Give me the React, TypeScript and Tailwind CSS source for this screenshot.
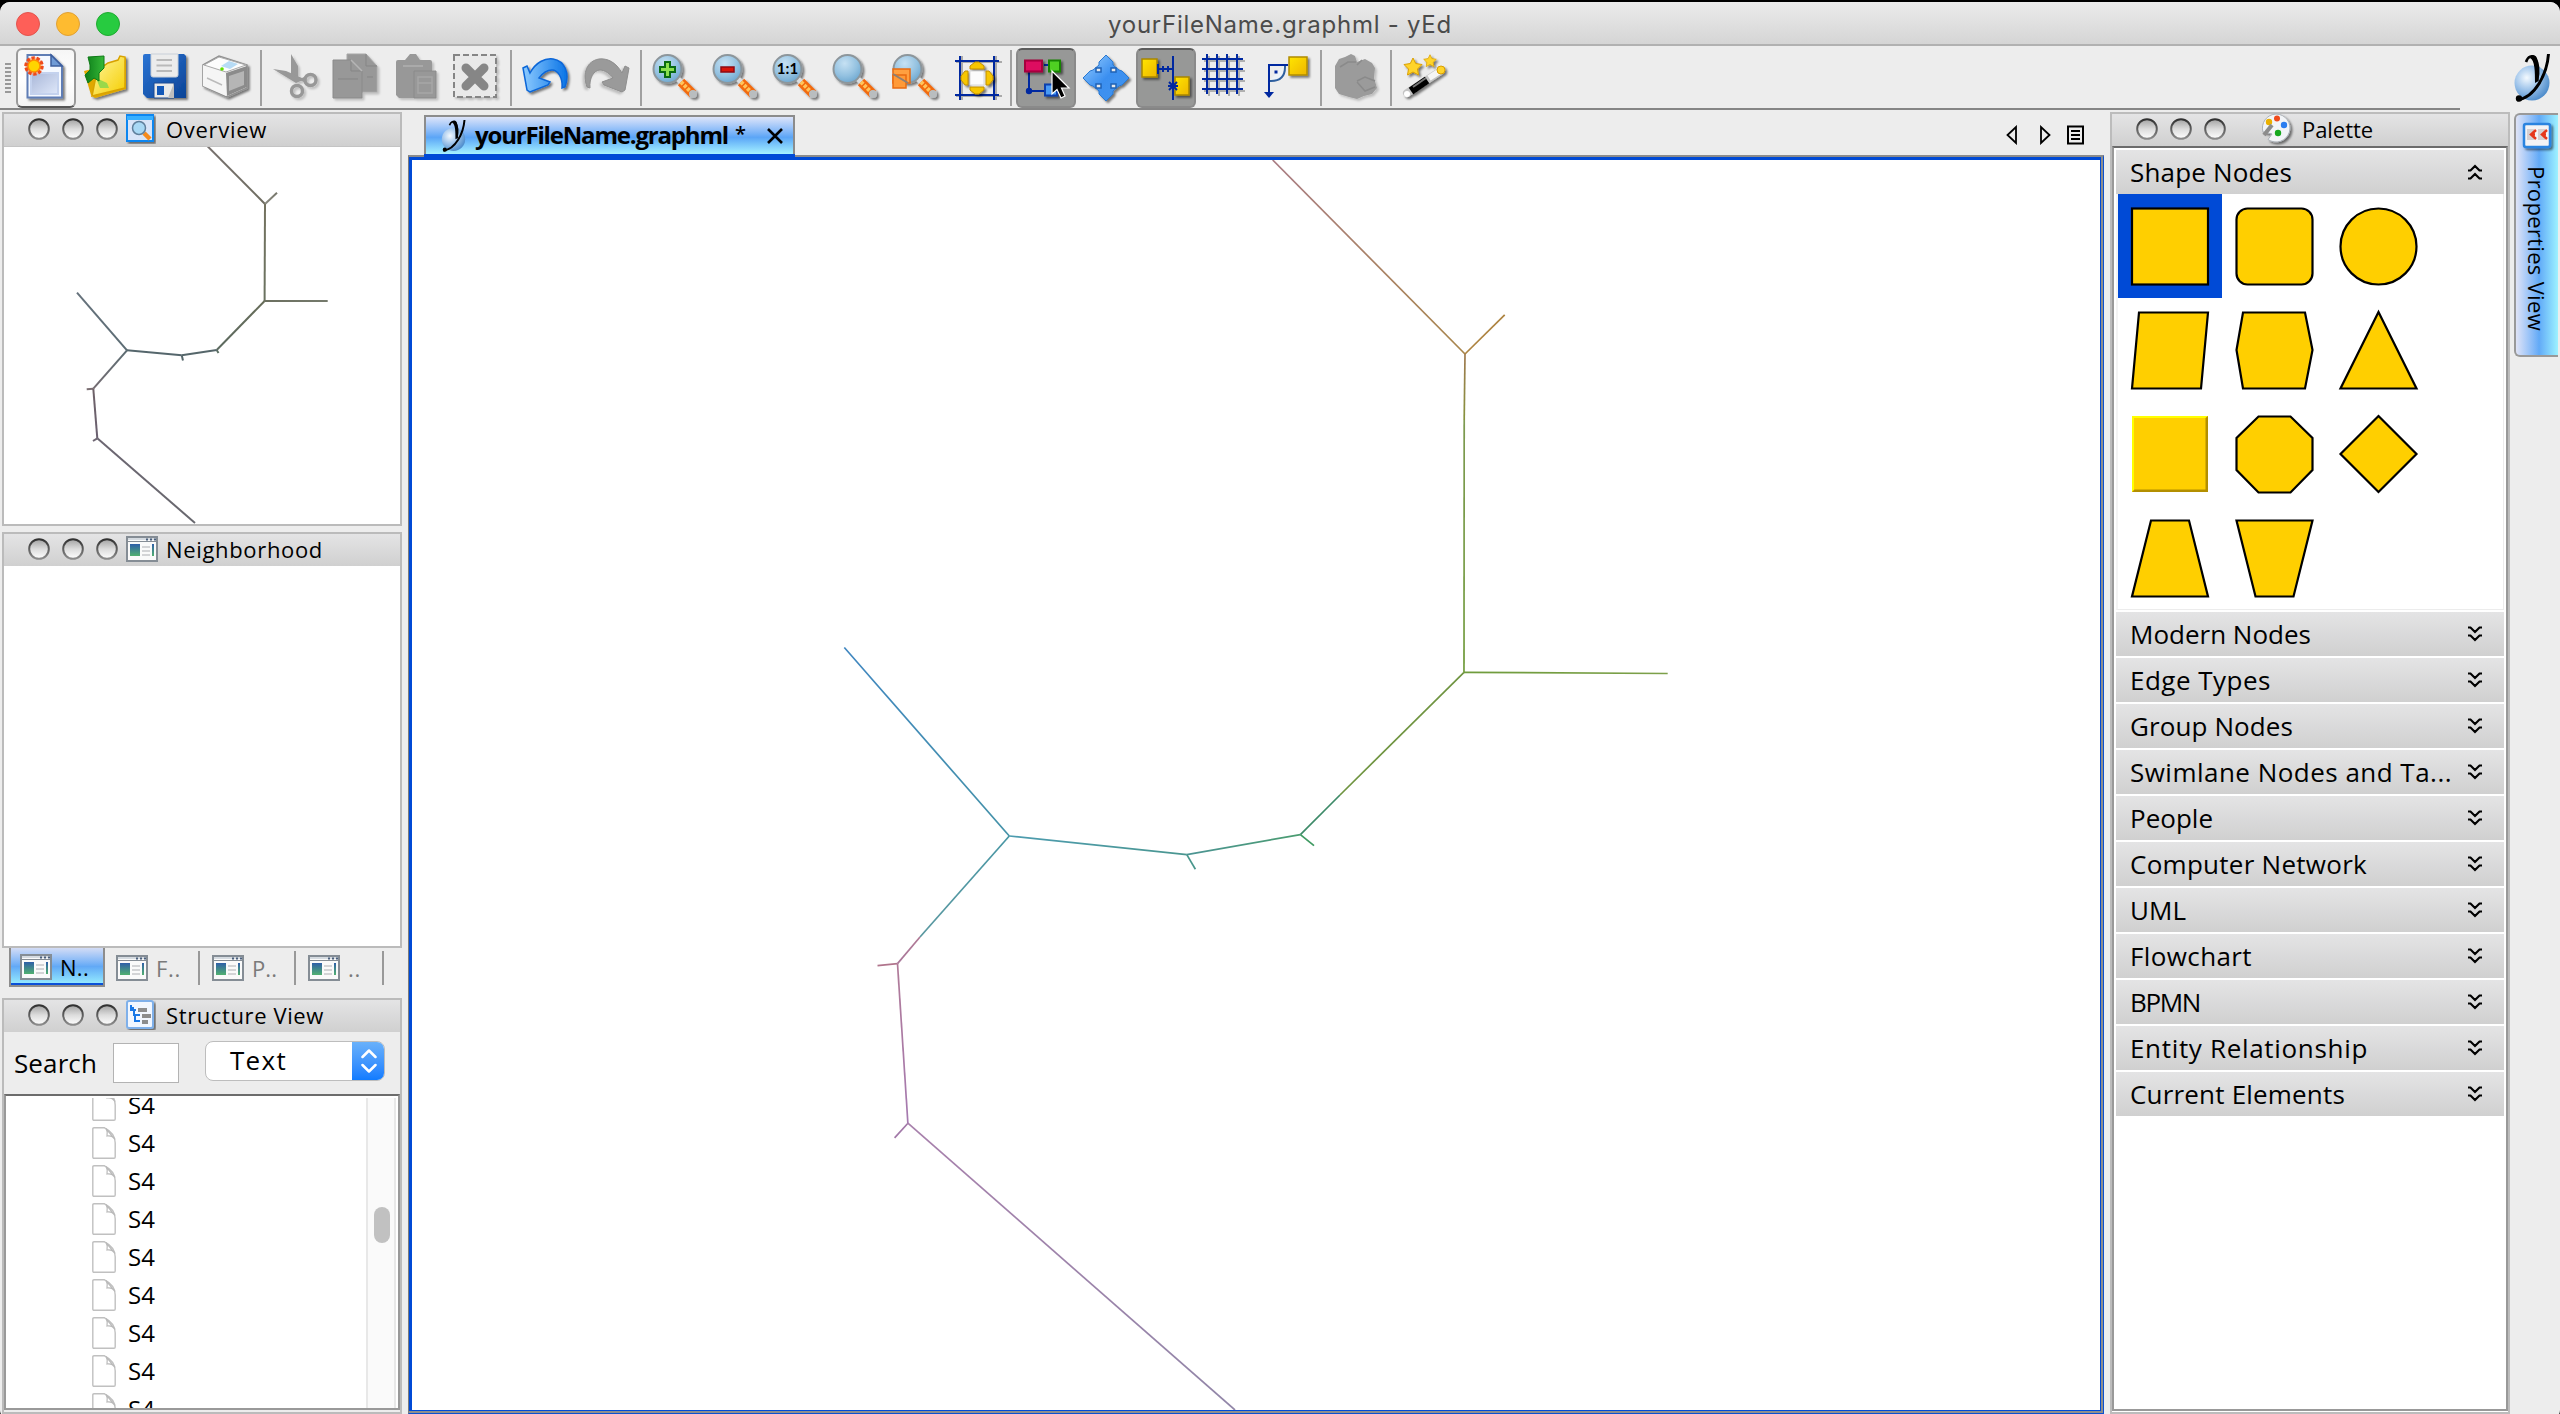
import React, { useLayoutEffect, useRef } from "react";

/* Text tracked so that it fills a given length. */
function T({
  children,
  w,
  vertical = false,
  className = "",
}: {
  children: string;
  w: number;
  vertical?: boolean;
  className?: string;
}) {
  const ref = useRef<HTMLSpanElement>(null);
  useLayoutEffect(() => {
    const el = ref.current;
    if (!el) return;
    el.style.letterSpacing = "0px";
    const box = el.getBoundingClientRect();
    const natural = vertical ? box.height : box.width;
    el.style.letterSpacing = (w - natural) / children.length + "px";
  }, [children, w, vertical]);
  return (
    <span ref={ref} className={"inline-block shrink-0 whitespace-pre " + className}>
      {children}
    </span>
  );
}

function Icon({ children }: { children: React.ReactNode }) {
  return (
    <svg viewBox="0 0 48 48" className="h-12 w-12 overflow-visible">
      {children}
    </svg>
  );
}

function Defs() {
  return (
    <svg className="absolute h-0 w-0">
      <defs>
        <filter id="sh" x="-20%" y="-20%" width="150%" height="150%">
          <feDropShadow dx="2" dy="2" stdDeviation="1" floodColor="#000" floodOpacity="0.5" />
        </filter>
        <filter id="soft" x="-20%" y="-20%" width="150%" height="150%">
          <feDropShadow dx="2" dy="2" stdDeviation="1" floodColor="#000" floodOpacity="0.2" />
        </filter>
        <linearGradient id="page" x1="0" y1="0" x2="1" y2="1">
          <stop offset="0" stopColor="#a9b7d8" />
          <stop offset="1" stopColor="#dfe8fa" />
        </linearGradient>
        <linearGradient id="folder" x1="0" y1="0" x2="1" y2="1">
          <stop offset="0" stopColor="#fff7a0" />
          <stop offset="1" stopColor="#f5cd00" />
        </linearGradient>
        <linearGradient id="green" x1="0" y1="0" x2="1" y2="0">
          <stop offset="0" stopColor="#0d7d1a" />
          <stop offset="1" stopColor="#35b837" />
        </linearGradient>
        <linearGradient id="disk" x1="0" y1="0" x2="1" y2="1">
          <stop offset="0" stopColor="#2b74d4" />
          <stop offset="1" stopColor="#0b4396" />
        </linearGradient>
        <radialGradient id="lens" cx="0.4" cy="0.3" r="0.75">
          <stop offset="0" stopColor="#c6e1f3" />
          <stop offset="0.6" stopColor="#93c1e0" />
          <stop offset="1" stopColor="#6aa5cf" />
        </radialGradient>
        <linearGradient id="undo" x1="0" y1="0" x2="1" y2="0">
          <stop offset="0" stopColor="#8dcbff" />
          <stop offset="1" stopColor="#0a74e6" />
        </linearGradient>
        <linearGradient id="gold" x1="0" y1="0" x2="1" y2="1">
          <stop offset="0" stopColor="#ffe500" />
          <stop offset="1" stopColor="#eeb600" />
        </linearGradient>
        <linearGradient id="move" x1="0" y1="0" x2="1" y2="1">
          <stop offset="0" stopColor="#9bd0ff" />
          <stop offset="0.5" stopColor="#3b8ff0" />
          <stop offset="1" stopColor="#3f93ee" />
        </linearGradient>
        <radialGradient id="ball" cx="0.35" cy="0.35" r="0.7">
          <stop offset="0" stopColor="#f4faff" />
          <stop offset="0.5" stopColor="#9dc3ea" />
          <stop offset="1" stopColor="#4d8ccb" />
        </radialGradient>
        <linearGradient id="knob" x1="0" y1="0" x2="0" y2="1">
          <stop offset="0" stopColor="#a2a2a2" />
          <stop offset="0.5" stopColor="#dcdcdc" />
          <stop offset="1" stopColor="#ffffff" />
        </linearGradient>
        <linearGradient id="knobline" x1="0" y1="0" x2="0" y2="1">
          <stop offset="0" stopColor="#303030" />
          <stop offset="1" stopColor="#8c8c8c" />
        </linearGradient>
        <linearGradient id="win" x1="0" y1="0" x2="0" y2="1">
          <stop offset="0" stopColor="#2f5fa8" />
          <stop offset="1" stopColor="#51b070" />
        </linearGradient>
      </defs>
    </svg>
  );
}

function NewIcon() {
  return (
    <Icon>
      <g filter="url(#sh)">
        <path d="M5.500 1H29L40 12V43.500H5.500Z" fill="#f4f8ff" stroke="#5f7db5" strokeWidth="2" />
      </g>
      <path d="M29 1V12H40Z" fill="#6f9bd6" stroke="#3d5f9e" strokeWidth="1.500" />
      <path d="M9 19H36V40H9Z" fill="url(#page)" stroke="#c4d2ee" strokeWidth="2" />
      <circle cx="12" cy="12" r="9" fill="#ff9e6e" opacity="0.6" />
      <circle cx="12" cy="12" r="8" fill="none" stroke="#ee4a1c" strokeWidth="3.500" strokeDasharray="3.200 1.800" />
      <circle cx="12" cy="12" r="6" fill="#ffd400" stroke="#ff8a00" strokeWidth="1.500" />
    </Icon>
  );
}
function OpenIcon() {
  return (
    <Icon>
      <g filter="url(#sh)">
        <path d="M2 17L9 41L13 44L44 35V4L39 3L36 7L26 9L14 14Z" fill="#e0a800" />
        <path d="M10 42L15 17L26 9L36 6L38 2L43 3V34Z" fill="url(#folder)" stroke="#d8a200" strokeWidth="1.500" />
      </g>
      <path d="M14 24L25 29L27 34L18 34Z" fill="#9ad84a" />
      <path d="M6 3L22 2V14L17 19V27L12 24L6 29L3 21L8 16V11Z" fill="url(#green)" stroke="#0e7a16" strokeWidth="1" />
    </Icon>
  );
}
function SaveIcon() {
  return (
    <Icon>
      <g filter="url(#sh)">
        <path d="M1 2Q1 0 3 0H42L44 2V44H5L1 40Z" fill="url(#disk)" />
      </g>
      <path d="M9 0H36V21Q36 23 34 23H11Q9 23 9 21Z" fill="#ececec" stroke="#c8cfd8" />
      <path d="M14.500 6H30M14.500 11.500H30M14.500 17H30" stroke="#b9b9b9" strokeWidth="1.800" />
      <path d="M12 29H32V44H12Z" fill="#e9e9e9" stroke="#1a4b94" />
      <path d="M15 32H22V41H15Z" fill="#1358b8" />
      <path d="M32 29V44H26Z" fill="#bdbdbd" />
    </Icon>
  );
}
function PrintIcon() {
  return (
    <Icon>
      <g filter="url(#sh)">
        <path d="M1 11L17 2L45 11V34L25 43L1 32Z" fill="#f3f3f3" stroke="#8f8f8f" strokeWidth="1.500" />
      </g>
      <path d="M24 19L45 12V33L25 42Z" fill="#8b8b8b" />
      <path d="M27 22L42 17V31L27 37Z" fill="#b5b5b5" />
      <path d="M1 11L24 19V42L1 32Z" fill="#f5f5f5" />
      <path d="M2 11L17 3L44 11L24 18Z" fill="#fdfdfd" stroke="#a9a9a9" />
      <path d="M19 12L27 7L36 10L28 15Z" fill="#b7dcf6" />
      <circle cx="20" cy="15" r="1.800" fill="#5fe000" />
      <path d="M5 24L20 31" stroke="#bbb" strokeWidth="1.500" />
    </Icon>
  );
}
function CutIcon() {
  return (
    <Icon>
      <g filter="url(#soft)">
        <path d="M19 0L26 12L26 28L19 25Z" fill="#989898" />
        <path d="M1 15L32 28L34 22L30 24L14 17Z" fill="#989898" />
        <path d="M1 15L24 29L31 26Z" fill="#989898" />
        <circle cx="38.500" cy="26" r="5.500" fill="none" stroke="#989898" strokeWidth="3.500" />
        <circle cx="25" cy="37" r="5.500" fill="none" stroke="#989898" strokeWidth="3.500" />
      </g>
    </Icon>
  );
}
function CopyIcon() {
  return (
    <Icon>
      <g filter="url(#soft)" fill="#989898">
        <path d="M15 0H34L45 12V38H15Z" stroke="#a6a6a6" />
        <path d="M1 6H19L30 17V44H1Z" stroke="#8a8a8a" />
      </g>
      <path d="M19 6V17H30M6 25H26M34 0V12H45M35 23H41" stroke="#858585" fill="none" />
      <path d="M19 6L30 17" stroke="#b5b5b5" strokeWidth="1.500" />
    </Icon>
  );
}
function PasteIcon() {
  return (
    <Icon>
      <g filter="url(#soft)" fill="#989898">
        <path d="M4 8Q4 6 6 6H13L18 0H24L28 6H38Q40 6 40 8V44H7L4 41Z" />
        <path d="M22 17H44V44H22Z" stroke="#8a8a8a" />
      </g>
      <path d="M11 12H31" stroke="#aaa" strokeWidth="2" />
      <path d="M26 23H40V39H26ZM26 29H40" stroke="#a6a6a6" fill="none" strokeWidth="1.500" />
    </Icon>
  );
}
function DeleteIcon() {
  return (
    <Icon>
      <g filter="url(#soft)">
        <rect x="2" y="1" width="42" height="42" fill="#e9e9e9" stroke="#858585" strokeWidth="2" strokeDasharray="6 3" />
        <path d="M14 14L32 32M32 14L14 32" stroke="#868686" strokeWidth="9" strokeLinecap="round" />
      </g>
    </Icon>
  );
}
function UndoIcon() {
  return (
    <Icon>
      <g filter="url(#sh)">
        <path
          d="M1 14L5 12L8 19C14 8 23 4 31 5C43 7 48 19 43 33L40 34C41 24 36 16 30 16C25 16 20 20 17 24L28 28L26 31L8 38L5 36Z"
          fill="url(#undo)"
          stroke="#0a66d8"
          strokeWidth="1.500"
        />
      </g>
    </Icon>
  );
}
function RedoIcon() {
  return (
    <Icon>
      <g filter="url(#soft)" transform="translate(48 0) scale(-1 1)">
        <path
          d="M1 14L5 12L8 19C14 8 23 4 31 5C43 7 48 19 43 33L40 34C41 24 36 16 30 16C25 16 20 20 17 24L28 28L26 31L8 38L5 36Z"
          fill="#9a9a9a"
          stroke="#8e8e8e"
          strokeWidth="1"
        />
      </g>
    </Icon>
  );
}
function Lens({ children }: { children?: React.ReactNode }) {
  return (
    <Icon>
      <g filter="url(#sh)">
        <path d="M24 23L30 29" stroke="#d9dde0" strokeWidth="5" />
        <path d="M29 28L41 40" stroke="#f36a10" strokeWidth="9" />
        <path d="M29 28L41 40" stroke="#ffc45a" strokeWidth="4" strokeDasharray="3 1.500" />
        <circle cx="41" cy="40" r="4" fill="#b9bdbf" />
        <circle cx="15.500" cy="15" r="14" fill="url(#lens)" stroke="#8d969b" strokeWidth="2" />
      </g>
      {children}
    </Icon>
  );
}
function FitIcon() {
  return (
    <Icon>
      <path d="M10 2V46M44 2V46M4 8H50M4 42H50" stroke="#aaa" strokeWidth="2" />
      <path d="M8 2V46M42 2V46M3 7H47M3 41H47" stroke="#0028a0" strokeWidth="2" />
      <g fill="#f7c600" stroke="#c08e00" strokeWidth="1" filter="url(#sh)">
        <path d="M18 15V12L23 8H27L32 12V15Z" />
        <path d="M18 33V36L23 40H27L32 36V33Z" />
        <path d="M16 17H13L9 22V26L13 31H16Z" />
        <path d="M34 17H37L41 22V26L37 31H34Z" />
      </g>
      <rect x="18" y="17" width="14" height="14" fill="#fbfbfb" stroke="#d8d8d8" />
    </Icon>
  );
}
function CreateIcon() {
  return (
    <Icon>
      <path d="M22 11H28M7 18V37H22" fill="none" stroke="#0028a0" strokeWidth="2" />
      <circle cx="7" cy="37" r="3.200" fill="#0028a0" />
      <g filter="url(#sh)">
        <rect x="3" y="6.500" width="17" height="11" fill="#dd0d60" stroke="#a5003c" strokeWidth="2" />
        <rect x="27" y="6.500" width="11" height="11" fill="#4fd021" stroke="#178405" strokeWidth="2" />
        <rect x="23" y="30.500" width="12" height="11" fill="#4a9bf5" stroke="#0b3fae" strokeWidth="2" />
      </g>
    </Icon>
  );
}
function MoveIcon() {
  return (
    <Icon>
      <g filter="url(#sh)">
        <path
          d="M24 1L31 8V11L37 16L40 17L47 24L40 31L37 32L31 37V40L24 47L17 40V37L11 32L8 31L1 24L8 17L11 16L17 11V8Z"
          fill="url(#move)"
          stroke="#2a78d0"
          strokeWidth="1"
        />
      </g>
      <g fill="#e6e9ec" stroke="#1f62b5" strokeWidth="1.500">
        <rect x="14" y="14" width="5" height="4" />
        <rect x="29" y="14" width="5" height="4" />
        <rect x="14" y="30" width="5" height="4" />
        <rect x="29" y="30" width="5" height="4" />
      </g>
    </Icon>
  );
}
function SnapIcon() {
  return (
    <Icon>
      <g filter="url(#sh)">
        <rect x="0" y="5" width="15" height="18" fill="url(#gold)" stroke="#a88600" strokeWidth="1.500" />
        <rect x="33" y="23" width="14" height="18" fill="url(#gold)" stroke="#a88600" strokeWidth="1.500" />
      </g>
      <path d="M31 2V46M16 15H30M16 10V20M21 12V18M26 12V18M26 32H36M27 28L35 36M35 28L27 36" stroke="#0028a0" strokeWidth="2" fill="none" />
    </Icon>
  );
}
function GridIcon() {
  return (
    <Icon>
      <g transform="translate(-2 0)">
        <path d="M9 2V42M19 2V42M29 2V42M39 2V42M4 7H45M4 17H45M4 27H45M4 37H45" stroke="#b0b0b0" strokeWidth="2" />
        <path d="M7 0V40M17 0V40M27 0V40M37 0V40M2 5H43M2 15H43M2 25H43M2 35H43" stroke="#0028a0" strokeWidth="2" />
      </g>
    </Icon>
  );
}
function OrthoIcon() {
  return (
    <Icon>
      <path d="M7 27H9C18 27 23 22 23 13V11" fill="#eef3f8" stroke="#2e5f9e" strokeWidth="2" />
      <rect x="12.500" y="16.500" width="3" height="3" fill="#0028a0" />
      <path d="M26 11H7V40" fill="none" stroke="#0028a0" strokeWidth="2" />
      <path d="M2 38H12L7 44Z" fill="#0028a0" />
      <g filter="url(#sh)">
        <rect x="27" y="3" width="18" height="18" fill="url(#gold)" stroke="#b08c00" strokeWidth="1.500" />
      </g>
    </Icon>
  );
}
function BlobIcon() {
  return (
    <Icon>
      <g filter="url(#soft)">
        <path d="M3 12L7 5L13 3L19 0L23 2L25 8L33 5L40 9L43 14L42 24L45 34L40 40L32 42L25 45L17 43L7 40L3 34Z" fill="#9b9b9b" />
      </g>
      <path d="M8 13L16 8L24 8M30 6L25 11M25 27L33 23L43 27M25 28L33 37L43 33" stroke="#8a8a8a" fill="none" strokeWidth="1.500" />
    </Icon>
  );
}
const STAR = "M0 -9L2.700 -3.500L9 -2.500L4.500 2L5.500 8L0 5L-5.500 8L-4.500 2L-9 -2.500L-2.700 -3.500Z";
function WandIcon() {
  return (
    <Icon>
      <g filter="url(#sh)">
        <path d="M5 39L37 18" stroke="#c4c4c4" strokeWidth="8" strokeLinecap="round" />
        <path d="M9 37L25 26" stroke="#000" strokeWidth="8" />
        <path d="M11 33L24 24" stroke="#777" strokeWidth="2" />
        <path d="M27 24L38 17" stroke="#f5f5f5" strokeWidth="6" />
        <circle cx="5" cy="40" r="3" fill="#fff" />
        <g fill="#ffd42a" stroke="#d99e00" strokeWidth="1">
          <path d={STAR} transform="translate(11 13)" />
          <path d={STAR} transform="translate(28 7) scale(0.700)" />
          <circle cx="39" cy="16" r="4" />
        </g>
      </g>
    </Icon>
  );
}

function Btn({ children, state = "" }: { children: React.ReactNode; state?: "" | "hover" | "pressed" }) {
  const look =
    state === "hover"
      ? "rounded-md border-2 border-[#9a9a9a] border-b-[#555] bg-linear-to-b from-[#f6f6f6] via-white to-[#f4f4f4]"
      : state === "pressed"
        ? "rounded-md border-2 border-[#8a8a8a] border-t-[#5c5c5c] bg-[#979897]"
        : "";
  return (
    <div className="relative flex h-[60px] w-[60px] shrink-0 items-center justify-center">
      <div className={"absolute inset-0 " + look} />
      <div className="relative">{children}</div>
    </div>
  );
}
function Sep() {
  return (
    <div className="-mt-px flex h-14 w-2.5 shrink-0 justify-center">
      <div className="h-full w-0.5 bg-[#a0a0a0]" />
    </div>
  );
}

function Toolbar() {
  return (
    <div className="flex h-16 shrink-0">
      <div className="flex h-16 w-[2460px] items-center border-b-2 border-[#858585] pt-0.5">
        <div className="flex h-[30px] w-4 flex-col justify-between pl-[5px]">
          {Array.from({ length: 8 }, (_, i) => (
            <div key={i} className="h-0.5 w-1.5 bg-[#999]" />
          ))}
        </div>
        <Btn state="hover"><NewIcon /></Btn>
        <Btn><OpenIcon /></Btn>
        <Btn><SaveIcon /></Btn>
        <Btn><PrintIcon /></Btn>
        <Sep />
        <Btn><CutIcon /></Btn>
        <Btn><CopyIcon /></Btn>
        <Btn><PasteIcon /></Btn>
        <Btn><DeleteIcon /></Btn>
        <Sep />
        <Btn><UndoIcon /></Btn>
        <Btn><RedoIcon /></Btn>
        <Sep />
        <Btn>
          <Lens>
            <path d="M13 8H18V13H23V18H18V23H13V18H8V13H13Z" fill="#8be04e" stroke="#0a6a12" strokeWidth="2" />
          </Lens>
        </Btn>
        <Btn>
          <Lens>
            <rect x="9" y="13" width="13" height="5" fill="#d8140a" stroke="#8e0a14" strokeWidth="1.500" />
          </Lens>
        </Btn>
        <Btn>
          <Lens>
            <text x="15.500" y="20" textAnchor="middle" fontFamily="Lato, sans-serif" fontWeight="700" fontSize="15" fill="#000">
              1:1
            </text>
          </Lens>
        </Btn>
        <Btn><Lens /></Btn>
        <Btn>
          <Lens>
            <rect x="1" y="15" width="17" height="14" fill="#ffa040" stroke="#e86a10" strokeWidth="1.500" />
            <rect x="1" y="21" width="13" height="13" fill="#ff9a38" stroke="#e86a10" strokeWidth="1.500" />
            <path d="M1 20L16 29" stroke="#8d7f75" strokeWidth="2" />
          </Lens>
        </Btn>
        <Btn><FitIcon /></Btn>
        <Sep />
        <Btn state="pressed">
          <CreateIcon />
          <svg viewBox="0 0 20 28" className="absolute top-[17px] left-[30px] h-7 w-5 overflow-visible">
            <path d="M0 0V23L5 18.500L9 27L13 25L9.500 17H17Z" fill="#000" stroke="#fff" strokeWidth="1.200" />
          </svg>
        </Btn>
        <Btn><MoveIcon /></Btn>
        <Btn state="pressed"><SnapIcon /></Btn>
        <Btn><GridIcon /></Btn>
        <Btn><OrthoIcon /></Btn>
        <Sep />
        <Btn><BlobIcon /></Btn>
        <Sep />
        <Btn><WandIcon /></Btn>
      </div>
      <div className="flex grow justify-end pt-2 pr-[9px]">
        <YLogo className="h-12 w-[38px]" />
      </div>
    </div>
  );
}

function YLogo({ className }: { className: string }) {
  return (
    <svg viewBox="0 0 38 48" className={className}>
      <circle cx="19" cy="29" r="17.500" fill="url(#ball)" />
      <path d="M13 8C15 2 19 1 22 4C26 10 26 18 24 27" fill="none" stroke="#000" strokeWidth="2.600" />
      <path d="M19 1C25 0 26 8 25.500 27L22 29C22 18 22 6 17 4Z" fill="#000" />
      <path d="M35.500 0C34 20 22 44 4 46" fill="none" stroke="#000" strokeWidth="3" />
      <circle cx="6" cy="44.500" r="3.200" fill="#000" />
    </svg>
  );
}

function Knobs() {
  return (
    <div className="flex gap-3">
      {[0, 1, 2].map((i) => (
        <svg key={i} viewBox="0 0 22 22" className="-mt-0.5 h-[22px] w-[22px]">
          <circle cx="11" cy="11" r="9.800" fill="url(#knob)" stroke="url(#knobline)" strokeWidth="2" />
        </svg>
      ))}
    </div>
  );
}

function WindowIcon() {
  return (
    <svg viewBox="0 0 32 26" className="h-[26px] w-8 shrink-0">
      <rect x="1" y="1" width="30" height="24" fill="#fafafa" stroke="#858d95" strokeWidth="2" />
      <path d="M2 2H30V4H2Z" fill="#d5dbe1" />
      <path d="M1 5.500H31" stroke="#858d95" strokeWidth="1" />
      <path d="M20 3.500H22M24 3.500H26M28 3.500H30" stroke="#4a5f7c" strokeWidth="2" />
      <rect x="4" y="8" width="10" height="12" fill="url(#win)" />
      <path d="M16 11H24M16 15H24M16 19H24" stroke="#c6c8ca" strokeWidth="1.600" />
      <rect x="26" y="8" width="2" height="12" fill="url(#win)" />
    </svg>
  );
}

const HEADER = "flex h-8 shrink-0 items-center bg-linear-to-b from-[#e4e4e5] to-[#d0d0d0]";

function Header({ title, w, icon }: { title: string; w: number; icon: React.ReactNode }) {
  return (
    <div className={HEADER + " pl-6"}>
      <Knobs />
      <div className="-mt-0.5 ml-2 flex h-8 w-8 items-center">{icon}</div>
      <T w={w} className="-mt-0.5 ml-2 text-[22px] leading-8">{title}</T>
    </div>
  );
}

type Seg = [number, number, number, number, string, string];

const GRAPH: Seg[] = [
  [1272.7, 160, 1465, 354, "#a97c84", "#a8854a"],
  [1465, 354, 1504.7, 314.8, "#ad8340", "#ad8340"],
  [1465, 354, 1464.2, 420, "#a07a50", "#86933c"],
  [1464.2, 420, 1464, 672.3, "#7d9a50", "#719c3c"],
  [1464, 672.3, 1667.7, 673.5, "#6f9c3c", "#7da04a"],
  [1464, 672.3, 1340, 795, "#6f9440", "#6f9440"],
  [1340, 795, 1300.4, 834.6, "#3d8a68", "#3d8a68"],
  [1300.4, 834.6, 1314, 845.7, "#3f9a62", "#3f9a62"],
  [1300.4, 834.6, 1186.8, 854.6, "#4a9c70", "#4c9494"],
  [1186.8, 854.6, 1195.4, 869.3, "#48968c", "#48968c"],
  [1186.8, 854.6, 1009.3, 836, "#4a9690", "#4d9cb0"],
  [1009.3, 836, 844.3, 647.5, "#4492a8", "#3f86c0"],
  [1009.3, 836, 920, 937, "#4896a4", "#5a98a0"],
  [920, 937, 897.5, 963.6, "#b07894", "#a8789a"],
  [897.5, 963.6, 877.5, 965.7, "#b0748c", "#b0748c"],
  [897.5, 963.6, 907.9, 1123.2, "#b07a98", "#a57ab0"],
  [907.9, 1123.2, 894.6, 1137.9, "#a278a8", "#a278a8"],
  [907.9, 1123.2, 1235, 1410, "#a880ac", "#9186a8"],
];

const OVERVIEW: Seg[] = [
  [207.3, 146, 265, 204, "#77716e", "#6e6c60"],
  [265, 204, 277, 192.7, "#8a8a80", "#77776c"],
  [265, 204, 264.6, 301, "#74725f", "#6a7260"],
  [264.6, 301, 327.7, 301, "#6c7060", "#757a6c"],
  [264.6, 301, 216.7, 350, "#666c58", "#5c6a60"],
  [216.7, 350, 218.5, 353, "#5c7064", "#5c7064"],
  [216.7, 350, 181.7, 355.3, "#55666a", "#55666a"],
  [181.7, 355.3, 183, 360.5, "#55666a", "#55666a"],
  [181.7, 355.3, 127, 350.3, "#55666c", "#55666c"],
  [127, 350.3, 77, 292.7, "#5c6c74", "#66727c"],
  [127, 350.3, 93.3, 388.7, "#5c6c72", "#746c72"],
  [93.3, 388.7, 86.700, 389.2, "#7a6e72", "#7a6e72"],
  [93.3, 388.7, 97.3, 438.3, "#6e6268", "#6a6070"],
  [97.3, 438.3, 93, 441, "#706874", "#706874"],
  [97.3, 438.3, 195, 523, "#6c6672", "#68686e"],
];

function Lines({ id, segs, box, width, className }: { id: string; segs: Seg[]; box: string; width: number; className: string }) {
  return (
    <svg viewBox={box} className={className}>
      <defs>
        {segs.map(([x1, y1, x2, y2, a, b], i) => (
          <linearGradient key={i} id={id + i} gradientUnits="userSpaceOnUse" x1={x1} y1={y1} x2={x2} y2={y2}>
            <stop offset="0" stopColor={a} />
            <stop offset="1" stopColor={b} />
          </linearGradient>
        ))}
      </defs>
      {segs.map(([x1, y1, x2, y2], i) => (
        <path key={i} d={`M${x1} ${y1}L${x2} ${y2}`} stroke={`url(#${id + i})`} strokeWidth={width} fill="none" />
      ))}
    </svg>
  );
}

function MiniTab({ label, w }: { label: string; w: number }) {
  return (
    <>
      <WindowIcon />
      <T w={w} className="ml-2 text-[22px] leading-8">{label}</T>
    </>
  );
}

function LeftColumn() {
  return (
    <div className="flex w-[400px] shrink-0 flex-col">
      <div className="flex h-[414px] shrink-0 flex-col border-2 border-[#bbb] bg-white">
        <Header
          title="Overview"
          w={101}
          icon={
            <svg viewBox="0 0 30 30" className="h-[30px] w-[30px]">
              <g filter="url(#sh)">
                <rect x="1" y="1" width="26" height="26" fill="#d8e4f8" stroke="#0f86f0" strokeWidth="2" />
              </g>
              <path d="M1 4H27" stroke="#38b0ff" strokeWidth="4" />
              <path d="M18 19L24 25" stroke="#f58a1c" strokeWidth="4.500" />
              <circle cx="13" cy="14" r="6.500" fill="#a8d8f5" stroke="#5f7f9c" strokeWidth="1.500" />
            </svg>
          }
        />
        <div className="h-px w-full shrink-0 bg-[#c4c4c4]" />
        <Lines id="o" segs={OVERVIEW} box="4 147 396 377" width={2} className="h-[377px] w-[396px]" />
      </div>
      <div className="mt-1.5 flex h-[416px] shrink-0 flex-col border-2 border-[#bbb] bg-white">
        <Header title="Neighborhood" w={157} icon={<WindowIcon />} />
      </div>
      <div className="flex h-[50px] shrink-0 items-start">
        <div className="ml-[7px] flex h-[39px] w-24 items-center border-x-2 border-b-2 border-[#8d8d8d] bg-linear-to-b from-[#d3dcf5] via-[#62a9f6] via-50% to-[#9af0ff] pl-[9px] shadow-[inset_0_-2px_0_#0a50d8]">
          <MiniTab label="N.." w={29} />
        </div>
        <div className="flex h-[39px] w-[95px] items-center pl-[11px] text-[#7a7a7a]">
          <MiniTab label="F.." w={25} />
          <div className="ml-auto h-[34px] w-0.5 bg-[#999]" />
        </div>
        <div className="flex h-[39px] w-24 items-center pl-3 text-[#7a7a7a]">
          <MiniTab label="P.." w={25} />
          <div className="ml-auto h-[34px] w-0.5 bg-[#999]" />
        </div>
        <div className="flex h-[39px] w-[88px] items-center pl-3 text-[#7a7a7a]">
          <MiniTab label=".." w={13} />
          <div className="ml-auto h-[34px] w-0.5 bg-[#999]" />
        </div>
      </div>
      <div className="flex h-[416px] shrink-0 flex-col border-2 border-[#bbb] bg-[#ededed]">
        <Header
          title="Structure View"
          w={158}
          icon={
            <svg viewBox="0 0 30 30" className="h-[30px] w-[30px]">
              <g filter="url(#sh)">
                <rect x="1" y="1" width="26" height="27" rx="2" fill="#f2f7ff" stroke="#7fb0ea" strokeWidth="2" />
              </g>
              <path d="M5 5V10H10M8 10V15H14M9 15V21H14M4 8H8" fill="none" stroke="#1a78e6" strokeWidth="2" />
              <path d="M12 10H21M16 16H25M16 22H22" stroke="#8d8d8d" strokeWidth="4" />
            </svg>
          }
        />
        <div className="flex h-[62px] shrink-0 items-center">
          <T w={83} className="-mt-px ml-[10px] text-[26px] leading-8">Search</T>
          <div className="ml-4 h-10 w-[66px] border border-[#b3b3b3] bg-white" />
          <div className="-mt-1 ml-[26px] flex h-10 w-[180px] justify-between overflow-hidden rounded-lg border border-[#bdbdbd] bg-white">
            <T w={57} className="ml-6 text-[26px] leading-9">Text</T>
            <div className="-my-px -mr-px flex w-[33px] items-center justify-center bg-linear-to-b from-[#6bb2fa] to-[#0a7aff]">
              <svg viewBox="0 0 16 26" className="h-[26px] w-4">
                <path d="M1.500 9L8 2.500L14.500 9M1.500 17L8 23.500L14.500 17" fill="none" stroke="#fff" strokeWidth="2.500" strokeLinecap="round" strokeLinejoin="round" />
              </svg>
            </div>
          </div>
        </div>
        <div className="flex h-[316px] shrink-0 overflow-hidden border-2 border-t-[#6c6c6c] border-r-[#999] border-b-[#999] border-l-[#999] bg-white pt-0.5">
          <div className="w-[360px] overflow-hidden">
            <div className="-mt-3 flex flex-col">
              {Array.from({ length: 9 }, (_, i) => (
                <div key={i} className="flex h-[38px] shrink-0 items-center pl-[86px]">
                  <svg viewBox="0 0 24 32" className="h-8 w-6">
                    <path d="M0.800 2Q0.800 0.800 2 0.800H12.500Q23.200 6 23.200 16V30Q23.200 31.200 22 31.200H2Q0.800 31.200 0.800 30Z" fill="#fff" stroke="#c0c0c0" strokeWidth="1.400" />
                    <path d="M14 1.500Q16 5 15 9Q20 8 23 12.500Z" fill="#fff" stroke="#bababa" strokeWidth="1.200" />
                  </svg>
                  <T w={27} className="ml-3 text-[24px] leading-8">S4</T>
                </div>
              ))}
            </div>
          </div>
          <div className="mr-0.5 w-[30px] border-x-2 border-x-[#e8e8e8] bg-[#fafafa] pt-[109px] pl-1.5">
            <div className="h-9 w-4 rounded-full bg-[#c1c1c1]" />
          </div>
        </div>
      </div>
    </div>
  );
}

function EditorColumn() {
  return (
    <div className="ml-1.5 flex w-[1696px] shrink-0 flex-col">
      <div className="relative z-10 flex h-[43px] shrink-0">
        <div className="mt-[3px] -mb-1 ml-4 flex h-11 w-[371px] flex-col border-x-2 border-t-2 border-[#8c8c8c]">
          <div className="flex grow items-center bg-linear-to-b from-[#dde4f9] via-[#5ba5f6] via-55% to-[#a6f2ff]">
            <YLogo className="ml-3.5 h-8 w-[27px]" />
            <T w={253} className="-mt-0.5 ml-2 text-[24px] leading-8 font-bold">yourFileName.graphml</T>
            <span className="-mt-1 ml-[7px] text-[20px] leading-8 font-semibold">*</span>
            <svg viewBox="0 0 16 16" className="mr-2.5 ml-auto h-4 w-4">
              <path d="M1 1L15 15M15 1L1 15" stroke="#000" strokeWidth="2.600" />
            </svg>
          </div>
          <div className="-mx-0.5 h-[5px] shrink-0 bg-[#004ad6]" />
        </div>
        <div className="ml-auto flex items-center pr-5">
          <svg viewBox="0 0 78 20" className="mt-0.5 h-5 w-[78px]">
            <path d="M10 2V18L1.500 10ZM35 2V18L43.500 10Z" fill="none" stroke="#000" strokeWidth="1.800" />
            <path d="M62 1.500H77V18.500H62ZM65 6H74M65 10H74M65 14H74" fill="none" stroke="#000" strokeWidth="2" />
          </svg>
        </div>
      </div>
      <div className="flex h-[1259px] shrink-0 border-t-2 border-r border-b border-l border-t-[#8c8c8c] border-r-[#0b50cf] border-b-[#0b50cf] border-l-[#7c7c7c]">
        <div className="flex w-full border-r-2 border-b-2 border-[#8e8e8e]">
          <div className="w-full border-t-3 border-r border-b border-l-3 border-[#004ad6] bg-white">
            <Lines id="g" segs={GRAPH} box="412 160 1688 1250" width={1.7} className="h-[1250px] w-[1688px]" />
          </div>
        </div>
      </div>
    </div>
  );
}

function Chevrons({ up = false }: { up?: boolean }) {
  return (
    <svg viewBox="0 0 14 16" className={up ? "h-4 w-3.5 rotate-180" : "h-4 w-3.5"}>
      <path d="M0 1.500H2.500L7 6L11.500 1.500H14M0 9.500H2.500L7 14L11.500 9.500H14" fill="none" stroke="#000" strokeWidth="2.200" />
    </svg>
  );
}

const SECTIONS: [string, number][] = [
  ["Modern Nodes", 181],
  ["Edge Types", 141],
  ["Group Nodes", 163],
  ["Swimlane Nodes and Ta...", 322],
  ["People", 83],
  ["Computer Network", 237],
  ["UML", 56],
  ["Flowchart", 122],
  ["BPMN", 70],
  ["Entity Relationship", 238],
  ["Current Elements", 215],
];

const SHAPES: React.ReactNode[] = [
  <rect x="14" y="14.500" width="76" height="76" />,
  <rect x="14.500" y="14.500" width="76" height="76" rx="11" />,
  <circle cx="52.500" cy="52.500" r="38" />,
  <path d="M21 14.500H90L83 90.500H14Z" />,
  <path d="M21 14.500H83L90.500 52L83 90.500H21L14.500 52Z" />,
  <path d="M52.500 14L90.500 90.500H14.500Z" />,
  <g stroke="none">
    <rect x="14" y="14" width="76" height="76" />
    <path d="M14 14H90L88 16H16V88L14 90Z" fill="#ffff00" />
    <path d="M90 14V90H14L16.500 87.500H87.500V16Z" fill="#b38f00" />
  </g>,
  <path d="M36.500 14.500H68.500L90.500 36V68L68.500 90.500H36.500L14.500 68V36Z" />,
  <path d="M52.500 14L90.500 52L52.500 90L14.500 52Z" />,
  <path d="M33 14.500H71L90 90.500H14Z" />,
  <path d="M14.500 14.500H90.500L71.500 90.500H33.500Z" />,
];

const BAR = "flex h-11 shrink-0 items-center justify-between bg-linear-to-b from-[#e4e4e5] to-[#d0d0d0] pl-[14px] pr-[22px] text-[26px]";

function PaletteColumn() {
  return (
    <div className="ml-1.5 flex h-[1302px] w-[400px] shrink-0 flex-col border-2 border-[#bcbcbc] bg-white">
      <div className={HEADER + " pl-[24px]"}>
        <Knobs />
        <svg viewBox="0 0 32 32" className="-mt-1 ml-[34px] h-8 w-8 overflow-visible">
          <g filter="url(#sh)">
            <path d="M16 2A14 14 0 1 1 8 27.500L12 22L3 20A14 14 0 0 1 16 2Z" fill="#f2f4f7" stroke="#aab0b6" />
          </g>
          <circle cx="9" cy="10" r="3.200" fill="#eab000" />
          <circle cx="17" cy="6.500" r="3" fill="#f04a1a" />
          <circle cx="24" cy="13" r="3.200" fill="#2a7df0" />
          <circle cx="18" cy="21" r="3.200" fill="#16a81e" />
          <path d="M4 23L12 13" stroke="#8c8c8c" strokeWidth="4" />
        </svg>
        <T w={71} className="-mt-0.5 ml-2.5 text-[22px] leading-8">Palette</T>
      </div>
      <div className="mb-px flex grow flex-col border-2 border-t-[#6c6c6c] border-r-[#999] border-b-[#999] border-l-[#999] px-0.5 pt-0.5">
        <div className={BAR}>
          <T w={162}>Shape Nodes</T>
          <Chevrons up />
        </div>
        <div className="mb-0.5 grid h-[416px] shrink-0 grid-cols-[104px_104px_104px] content-start border-r border-b border-l-2 border-[#ececec] border-l-[#f4f4f4]">
          {SHAPES.map((s, i) => (
            <svg key={i} viewBox="0 0 104 104" className={i === 0 ? "h-[104px] w-[104px] bg-[#004ad6]" : "h-[104px] w-[104px]"} fill="#ffcf00" stroke="#000" strokeWidth="2.200">
              {s}
            </svg>
          ))}
        </div>
        <div className="flex flex-col gap-0.5">
          {SECTIONS.map(([name, w]) => (
            <div key={name} className={BAR}>
              <T w={w}>{name}</T>
              <Chevrons />
            </div>
          ))}
        </div>
      </div>
    </div>
  );
}

function SideTab() {
  return (
    <div className="ml-1 mt-px flex h-[244px] w-[44px] flex-col items-center rounded-l-md border-2 border-r-0 border-[#999] bg-linear-to-r from-[#dfe3f6] via-[#62aaf7] via-55% to-[#9ef2ff]">
      <svg viewBox="0 0 30 28" className="mt-[7px] h-7 w-[30px] overflow-visible">
        <g filter="url(#sh)">
          <rect x="2" y="2" width="26" height="23" rx="2" fill="#f3f3f5" stroke="#2c84e0" strokeWidth="2.500" />
        </g>
        <rect x="5" y="7" width="7" height="11" fill="#d5d0d2" />
        <rect x="16" y="7" width="7" height="11" fill="#d5d0d2" />
        <path d="M14 8L9 12.500L14 17M9 12.500H13M25 8L20 12.500L25 17M20 12.500H24" fill="none" stroke="#e5381c" strokeWidth="2.500" />
      </svg>
      <T w={165} vertical className="mt-4 text-[22px] leading-8 [writing-mode:vertical-rl]">Properties View</T>
    </div>
  );
}

export default function App() {
  return (
    <div className="h-[1414px] w-[2560px] overflow-hidden bg-[#16283a] font-['Open_Sans','Noto_Sans',sans-serif] text-black">
      <Defs />
      <div className="h-0.5 bg-black" />
      <div className="flex h-[1418px] flex-col overflow-hidden rounded-[10px] bg-[#ededed] shadow-[0_-6px_0_6px_#000]">
        <div className="relative flex h-11 shrink-0 items-center justify-center border-b-2 border-[#b1b1b1] bg-linear-to-b from-[#ebebeb] to-[#d5d5d5] pt-0.5">
          <div className="absolute left-4 flex gap-4">
            <div className="h-6 w-6 rounded-full border border-[#e2544d] bg-[#fe5f58]" />
            <div className="h-6 w-6 rounded-full border border-[#e0a034] bg-[#febb30]" />
            <div className="h-6 w-6 rounded-full border border-[#1faa30] bg-[#27cb40]" />
          </div>
          <T w={344} className="mt-0.5 font-[Inter,sans-serif] text-[24px] leading-8 text-[#4b4b4b]">yourFileName.graphml - yEd</T>
        </div>
        <Toolbar />
        <div className="flex grow pt-0.5 pl-0.5">
          <LeftColumn />
          <EditorColumn />
          <PaletteColumn />
          <SideTab />
        </div>
      </div>
    </div>
  );
}
